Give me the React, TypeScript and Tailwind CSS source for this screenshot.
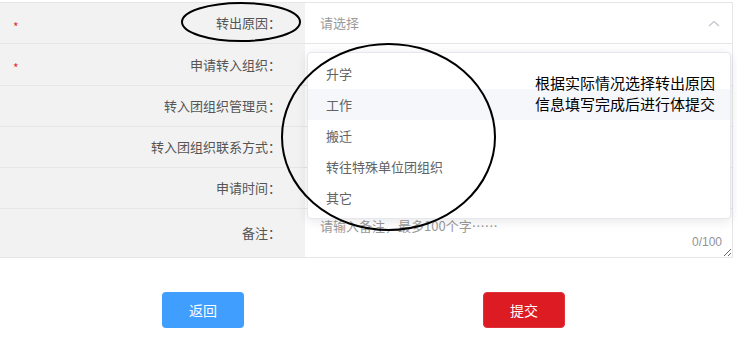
import React from 'react';

interface FormRowProps {
    label: string;
    required?: boolean;
    height: string;
    children?: React.ReactNode;
}

const FormRow = ({ label, required, height, children }: FormRowProps) => (
    <div className={`flex border-b border-[#e6e6e6] ${height}`}>
        <div className="relative flex w-[305px] shrink-0 items-center justify-end bg-[#f2f2f2] pr-[24px] text-[13px] text-[#555]">
            {required && (
                <span className="absolute left-[13px] top-[18px] text-[12px] leading-none text-[#e0323a]">*</span>
            )}
            {label}：
        </div>
        <div className="relative flex-1 bg-white">{children}</div>
    </div>
);

const reasons = ['升学', '工作', '搬迁', '转往特殊单位团组织', '其它'];

export default function App() {
    return (
        <div className="relative h-[347px] w-[737px] overflow-hidden bg-white font-['Noto_Sans_CJK_SC',sans-serif]">
            {/* form table */}
            <div className="mt-[2px] w-[733px] border-r border-t border-[#e6e6e6]">
                <FormRow label="转出原因" required height="h-[41px]">
                    <div className="flex h-full items-center justify-between pl-[15px] pr-[12px]">
                        <span className="text-[13px] text-[#9a9a9a]">请选择</span>
                        <svg width="12" height="7" viewBox="0 0 12 7" fill="none">
                            <polyline points="1,6 6,1.5 11,6" stroke="#c0c4cc" strokeWidth="1.2" />
                        </svg>
                    </div>
                </FormRow>
                <FormRow label="申请转入组织" required height="h-[42px]" />
                <FormRow label="转入团组织管理员" height="h-[41px]" />
                <FormRow label="转入团组织联系方式" height="h-[41px]" />
                <FormRow label="申请时间" height="h-[41px]" />
                <FormRow label="备注" height="h-[49px]">
                    <textarea
                        placeholder="请输入备注，最多100个字……"
                        className="block h-full w-full px-[15px] pt-[7px] text-[13px] leading-[19px] text-[#555] outline-none placeholder:text-[#9a9a9a]"
                    />
                    <span className="absolute bottom-[6px] right-[10px] font-['Liberation_Sans',sans-serif] text-[12px] text-[#909399]">
                        0/100
                    </span>
                </FormRow>
            </div>

            {/* actions */}
            <div className="mt-[34px] flex gap-[239px] pl-[162px]">
                <button className="h-[36px] w-[82px] rounded-[4px] bg-[#409eff] text-[14px] text-white">返回</button>
                <button className="h-[36px] w-[82px] rounded-[4px] border border-[#e0323a] bg-[#dc1b23] text-[14px] text-white">
                    提交
                </button>
            </div>

            {/* select dropdown */}
            <div className="absolute left-[307px] top-[52px] w-[424px] rounded-[4px] border border-[#e4e7ed] bg-white py-[5px] shadow-[0_2px_12px_0_rgba(0,0,0,0.1)]">
                {reasons.map((r, i) => (
                    <div
                        key={r}
                        className={`flex h-[31px] items-center pl-[18px] text-[13px] text-[#606266] ${i === 1 ? 'bg-[#f5f7fa]' : ''}`}
                    >
                        {r}
                    </div>
                ))}
            </div>

            {/* annotation */}
            <div className="absolute left-[535px] top-[72px] text-[15px] leading-[21px] text-black">
                <div>根据实际情况选择转出原因</div>
                <div>信息填写完成后进行体提交</div>
            </div>
            <svg className="pointer-events-none absolute left-0 top-0" width="737" height="347">
                <ellipse cx="241" cy="22" rx="59" ry="19" fill="none" stroke="#000" strokeWidth="2" />
                <ellipse cx="388.5" cy="137" rx="106.5" ry="93" fill="none" stroke="#000" strokeWidth="2" />
            </svg>
        </div>
    );
}
